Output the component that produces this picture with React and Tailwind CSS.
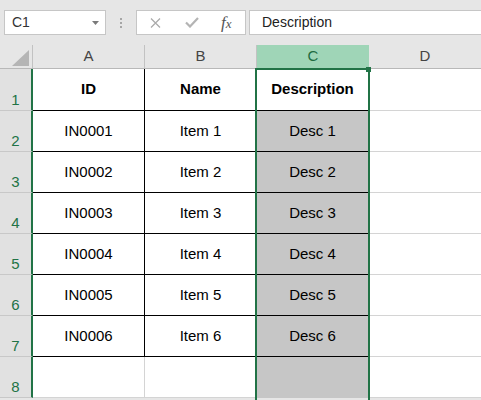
import React from "react";

const rows = [
  ["ID", "Name", "Description"],
  ["IN0001", "Item 1", "Desc 1"],
  ["IN0002", "Item 2", "Desc 2"],
  ["IN0003", "Item 3", "Desc 3"],
  ["IN0004", "Item 4", "Desc 4"],
  ["IN0005", "Item 5", "Desc 5"],
  ["IN0006", "Item 6", "Desc 6"],
  ["", "", ""],
];

function Row({ n, data }) {
  const inTable = n <= 7;
  const header = n === 1;
  const h = n === 1 ? "h-[42px]" : "h-[41px]";
  const cellBorder = inTable ? "border-r border-b border-black" : "border-r border-b border-[#d4d4d4]";
  const weight = header ? "font-bold" : "font-normal";
  return (
    <div className={`flex ${h}`}>
      <div className="w-[33px] shrink-0 bg-[#e1e1e1] border-r-2 border-r-[#217346] border-b border-b-[#c8c8c8] flex items-end justify-center pb-[2px] text-[15px] leading-[16px] text-[#217346]">
        {n}
      </div>
      <div className={`w-[112px] shrink-0 bg-white flex items-center justify-center text-[15px] text-black ${weight} ${cellBorder}`}>
        {data[0]}
      </div>
      <div className={`w-[112px] shrink-0 bg-white flex items-center justify-center text-[15px] text-black ${weight} ${cellBorder}`}>
        {data[1]}
      </div>
      <div
        className={`w-[112px] shrink-0 flex items-center justify-center text-[15px] text-black ${weight} ${
          header ? "bg-white" : "bg-[#c6c6c6]"
        } ${n <= 7 ? "border-r border-b border-black" : "border-r border-b border-[#c6c6c6]"}`}
      >
        {data[2]}
      </div>
      <div className="flex-1 bg-white border-b border-[#d4d4d4]"></div>
    </div>
  );
}

export default function App() {
  return (
    <div className="relative w-[481px] h-[400px] overflow-hidden bg-[#e6e6e6] font-['Liberation_Sans',Arial,sans-serif]">
      {/* toolbar */}
      <div className="h-[45px] flex items-start pt-[10px] pl-[4px]">
        <div className="w-[102px] h-[25px] bg-white border border-[#c6c6c6] flex items-center justify-between pl-[7px] pr-[6px]">
          <span className="text-[14px] text-[#333]">C1</span>
          <svg width="7" height="4" viewBox="0 0 7 4">
            <path d="M0 0 L7 0 L3.5 4 Z" fill="#7a7a7a" />
          </svg>
        </div>
        <div className="ml-[14px] h-[25px] flex flex-col justify-center gap-[2px]">
          <div className="w-[2px] h-[2px] bg-[#a6a6a6]"></div>
          <div className="w-[2px] h-[2px] bg-[#a6a6a6]"></div>
          <div className="w-[2px] h-[2px] bg-[#a6a6a6]"></div>
        </div>
        <div className="ml-[14px] w-[110px] h-[25px] bg-white border border-[#c6c6c6] flex items-center pl-[13px]">
          <svg width="11" height="10" viewBox="0 0 11 10">
            <path d="M1 0.5 L10 9.5 M10 0.5 L1 9.5" stroke="#ababab" strokeWidth="1.3" fill="none" />
          </svg>
          <svg className="ml-[24px]" width="14" height="11" viewBox="0 0 14 11">
            <path d="M1 5.5 L5 9.5 L13 1" stroke="#b4b4b4" strokeWidth="2.2" fill="none" />
          </svg>
          <span className="ml-[22px] italic font-['Liberation_Serif',serif] text-[17px] leading-none text-[#555]">
            f<span className="text-[13px]">x</span>
          </span>
        </div>
        <div className="ml-[3px] flex-1 h-[25px] bg-white border border-r-0 border-[#c6c6c6] flex items-center pl-[12px]">
          <span className="text-[14px] text-[#222]">Description</span>
        </div>
      </div>

      {/* column header */}
      <div className="flex h-[24px] border-b border-[#b8b8b8]">
        <div className="w-[33px] shrink-0 border-r border-[#c2c2c2] flex items-end justify-end pr-[3px] pb-[2px]">
          <svg width="17" height="16" viewBox="0 0 17 16">
            <path d="M17 0 L17 16 L0 16 Z" fill="#b5b5b5" />
          </svg>
        </div>
        <div className="w-[112px] shrink-0 border-r border-[#c2c2c2] flex items-center justify-center text-[15px] text-[#444]">A</div>
        <div className="w-[112px] shrink-0 border-r border-[#c2c2c2] flex items-center justify-center text-[15px] text-[#444]">B</div>
        <div className="w-[112px] shrink-0 bg-[#9fd5b7] flex items-center justify-center text-[15px] text-[#1e6b41]">C</div>
        <div className="flex-1 flex items-center justify-center text-[15px] text-[#444]">D</div>
      </div>

      {rows.map((r, i) => (
        <Row key={i} n={i + 1} data={r} />
      ))}

      {/* selection overlay */}
      <div className="absolute left-[255px] top-[68px] w-[115px] h-[340px] border-2 border-[#217346] pointer-events-none"></div>
      <div className="absolute left-[366px] top-[67px] w-[5px] h-[5px] bg-[#217346] pointer-events-none"></div>
    </div>
  );
}
